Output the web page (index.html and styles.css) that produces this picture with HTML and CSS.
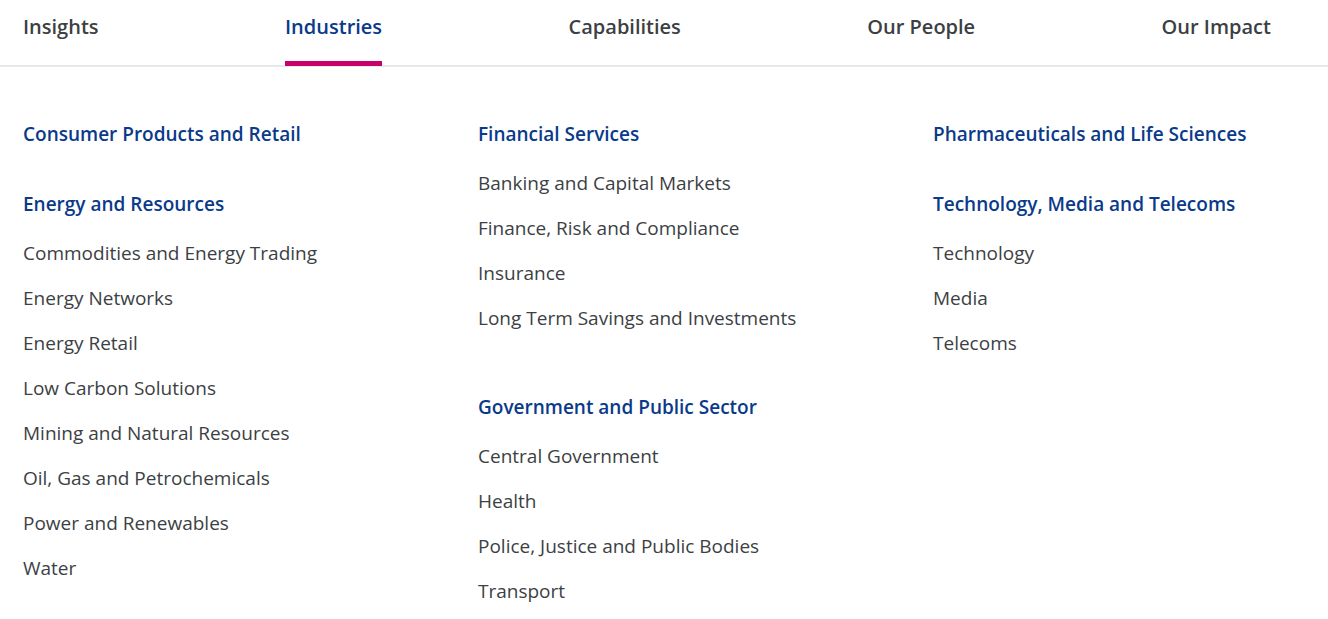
FILE: index.html
```html
<!DOCTYPE html>
<html lang="en">
<head>
    <meta charset="UTF-8">
    <meta name="viewport" content="width=device-width, initial-scale=1.0">
    <title>Industries</title>
    <link rel="stylesheet" href="styles.css">
</head>
<body>
    <nav class="nav">
        <a class="nav-item" href="#">Insights</a>
        <a class="nav-item active" href="#">Industries</a>
        <a class="nav-item" href="#">Capabilities</a>
        <a class="nav-item" href="#">Our People</a>
        <a class="nav-item" href="#">Our Impact</a>
    </nav>

    <div class="menu">
        <div class="menu-col">
            <div class="group">
                <a class="group-title" href="#">Consumer Products and Retail</a>
            </div>
            <div class="group">
                <a class="group-title" href="#">Energy and Resources</a>
                <ul class="links">
                    <li><a href="#">Commodities and Energy Trading</a></li>
                    <li><a href="#">Energy Networks</a></li>
                    <li><a href="#">Energy Retail</a></li>
                    <li><a href="#">Low Carbon Solutions</a></li>
                    <li><a href="#">Mining and Natural Resources</a></li>
                    <li><a href="#">Oil, Gas and Petrochemicals</a></li>
                    <li><a href="#">Power and Renewables</a></li>
                    <li><a href="#">Water</a></li>
                </ul>
            </div>
        </div>

        <div class="menu-col">
            <div class="group">
                <a class="group-title" href="#">Financial Services</a>
                <ul class="links">
                    <li><a href="#">Banking and Capital Markets</a></li>
                    <li><a href="#">Finance, Risk and Compliance</a></li>
                    <li><a href="#">Insurance</a></li>
                    <li><a href="#">Long Term Savings and Investments</a></li>
                </ul>
            </div>
            <div class="group">
                <a class="group-title" href="#">Government and Public Sector</a>
                <ul class="links">
                    <li><a href="#">Central Government</a></li>
                    <li><a href="#">Health</a></li>
                    <li><a href="#">Police, Justice and Public Bodies</a></li>
                    <li><a href="#">Transport</a></li>
                </ul>
            </div>
        </div>

        <div class="menu-col">
            <div class="group">
                <a class="group-title" href="#">Pharmaceuticals and Life Sciences</a>
            </div>
            <div class="group">
                <a class="group-title" href="#">Technology, Media and Telecoms</a>
                <ul class="links">
                    <li><a href="#">Technology</a></li>
                    <li><a href="#">Media</a></li>
                    <li><a href="#">Telecoms</a></li>
                </ul>
            </div>
        </div>
    </div>
</body>
</html>
```

FILE: styles.css
```css
body {
    font-family: "Open Sans", "Liberation Sans", sans-serif;
    margin: 0;
    padding: 0;
    background-color: #fff;
    color: #3c3f44;
}
a {
    text-decoration: none;
    color: inherit;
}
.nav {
    display: flex;
    justify-content: space-between;
    padding: 0 57px 0 23px;
    border-bottom: 2px solid #e8e8e8;
}
.nav-item {
    display: block;
    padding: 14px 0 21px;
    line-height: 26px;
    font-size: 20px;
    font-weight: 600;
    color: #3c3f44;
    border-bottom: 5px solid transparent;
    margin-bottom: -1px;
}
.nav-item.active {
    color: #0a3a8a;
    border-bottom-color: #c8006e;
}
.menu {
    display: grid;
    grid-template-columns: repeat(3, 1fr);
    column-gap: 83px;
    padding: 54px 23px 0;
}
.group {
    margin-bottom: 44px;
}
.group:last-child {
    margin-bottom: 0;
}
.group-title {
    display: block;
    font-size: 19px;
    font-weight: 600;
    line-height: 26px;
    margin-bottom: 14px;
    color: #0a3a8a;
}
.links {
    list-style: none;
    margin: 0;
    padding: 0 0 9px;
}
.group:last-child .links {
    padding-bottom: 0;
}
.links li {
    font-size: 19px;
    line-height: 45px;
}
```
